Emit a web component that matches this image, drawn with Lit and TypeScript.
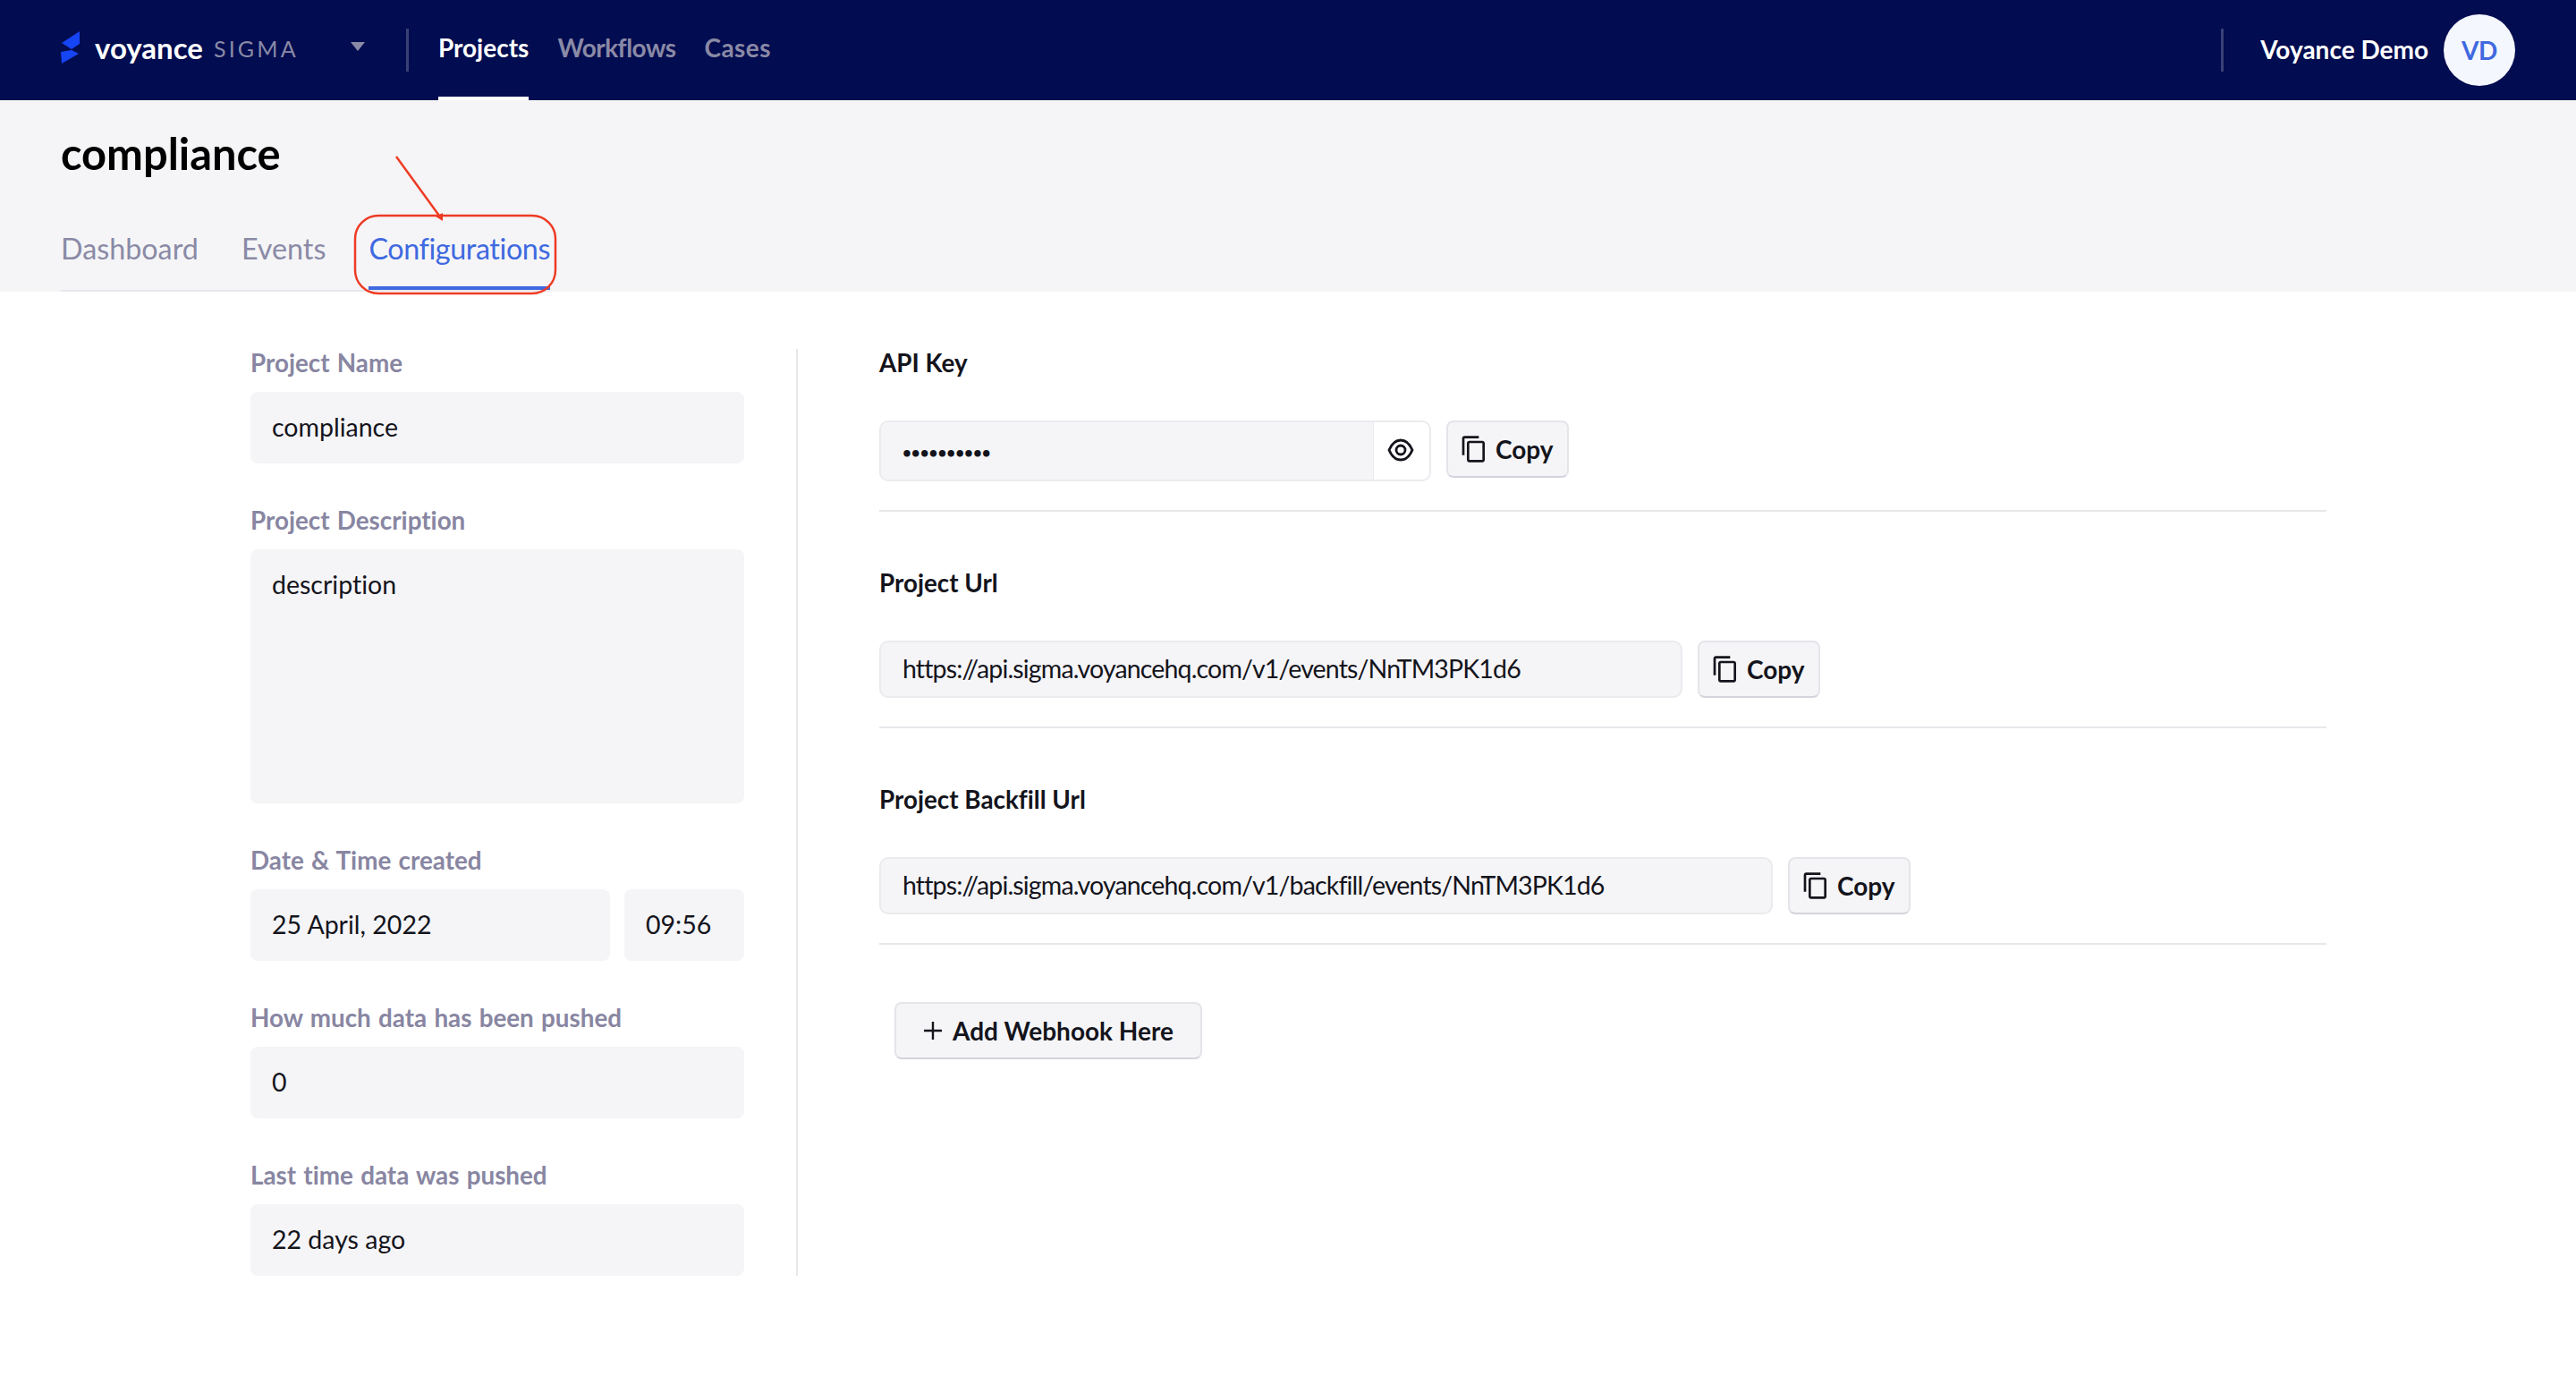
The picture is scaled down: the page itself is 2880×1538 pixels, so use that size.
import { LitElement, html, css, svg } from "lit";
import { customElement } from "lit/decorators.js";

const copyIcon = svg`<path d="M16 1H4c-1.1 0-2 .9-2 2v14h2V3h12V1zm3 4H8c-1.1 0-2 .9-2 2v14c0 1.1.9 2 2 2h11c1.1 0 2-.9 2-2V7c0-1.1-.9-2-2-2zm0 16H8V7h11v14z" />`;

const links = [
  { label: "Project Url", value: "https://api.sigma.voyancehq.com/v1/events/NnTM3PK1d6", width: 898 },
  { label: "Project Backfill Url", value: "https://api.sigma.voyancehq.com/v1/backfill/events/NnTM3PK1d6", width: 999 },
];

@customElement("app-root")
export class AppRoot extends LitElement {
  static styles = css`
    :host {
      display: block;
      position: relative;
      min-height: 1538px;
      background: #fff;
      color: #14141c;
      font-family: "Lato", "Liberation Sans", sans-serif;
      font-size: 28.5px;
      font-variant-ligatures: none;
    }

    .topbar {
      display: flex;
      align-items: center;
      height: 112px;
      padding: 0 68px;
      box-sizing: border-box;
      background: #020c50;
      color: #fff;
    }

    .logo {
      display: block;
      width: 22px;
      height: 36px;
      margin: 0 16px 6px 0;
    }

    .wordmark {
      margin-bottom: 6px;
      font-size: 33px;
      font-weight: 700;
      line-height: 40px;
    }

    .product {
      width: 153px;
      margin: 0 0 5px 12px;
      font-size: 25px;
      letter-spacing: 3.2px;
      color: #8a8aa6;
    }

    .caret {
      width: 0;
      height: 0;
      border-left: 8px solid transparent;
      border-right: 8px solid transparent;
      border-top: 10px solid #8a8aa6;
      margin-bottom: 8px;
    }

    .bar-sep {
      width: 3px;
      height: 48px;
      background: #3a4175;
    }

    .brand-sep {
      margin-left: 46px;
    }

    .nav {
      display: flex;
      gap: 32px;
      height: 112px;
      margin-left: 33px;
      font-size: 28px;
    }

    .nav a {
      box-sizing: border-box;
      height: 112px;
      line-height: 106px;
      font-weight: 700;
      color: #8a8aa6;
    }

    .nav a.active {
      color: #fff;
      border-bottom: 4px solid #fff;
    }

    .nav a.tight {
      letter-spacing: -0.5px;
    }

    .nav a.loose {
      letter-spacing: 0.4px;
    }

    .user {
      display: flex;
      align-items: center;
      margin-left: auto;
      font-size: 28px;
    }

    .user-name {
      margin: 0 17px 2px 41px;
      font-weight: 700;
    }

    .avatar {
      display: grid;
      place-items: center;
      width: 80px;
      height: 80px;
      border-radius: 50%;
      background: #f5f7ff;
      color: #3f69e0;
      font-weight: 700;
      letter-spacing: -0.3px;
    }

    .subheader {
      height: 214px;
      padding: 30px 0 0 68px;
      box-sizing: border-box;
      background: #f5f5f7;
    }

    h1 {
      margin: 0;
      font-size: 48.8px;
      font-weight: 700;
      line-height: 58px;
      color: #000;
    }

    .tabs {
      display: inline-flex;
      gap: 48px;
      margin-top: 40px;
      border-bottom: 2px solid #e8e8ec;
    }

    .tab {
      height: 84px;
      padding-top: 18px;
      box-sizing: border-box;
      font-size: 32.3px;
      line-height: 40px;
      color: #8a8aa6;
    }

    .tab.active {
      letter-spacing: -0.4px;
      color: #3f69e0;
      border-bottom: 4px solid #3f69e0;
    }

    .content {
      display: flex;
      padding: 64px 0 0 280px;
    }

    .details {
      width: 552px;
      padding-right: 58px;
      border-right: 2px solid #e8e8ec;
    }

    .field {
      margin-bottom: 48px;
    }

    .field:last-child {
      margin-bottom: 0;
    }

    .label {
      margin-bottom: 16px;
      font-size: 27.8px;
      line-height: 32px;
      font-weight: 700;
      word-spacing: 1.5px;
      color: #8886a2;
    }

    .box {
      height: 80px;
      padding: 0 24px;
      box-sizing: border-box;
      border-radius: 8px;
      background: #f5f5f7;
      line-height: 78px;
    }

    .box.tall {
      height: 284px;
    }

    .date-row {
      display: flex;
      gap: 16px;
    }

    .date-row .box:first-child {
      width: 402px;
    }

    .date-row .box:last-child {
      flex: 1;
    }

    .keys {
      width: 1618px;
      margin-left: 91px;
    }

    .key-label {
      margin-bottom: 48px;
      font-size: 27.8px;
      line-height: 32px;
      font-weight: 700;
    }

    .key-row {
      display: flex;
      align-items: flex-start;
      gap: 17px;
      padding-bottom: 32px;
      margin-bottom: 64px;
      border-bottom: 2px solid #e8e8ec;
    }

    .readout {
      height: 64px;
      padding: 0 24px;
      box-sizing: border-box;
      border: 2px solid #ebebef;
      border-radius: 10px;
      background: #f5f5f7;
      line-height: 58px;
      letter-spacing: -0.85px;
    }

    .secret {
      display: flex;
      width: 617px;
      height: 68px;
      box-sizing: border-box;
      border: 2px solid #ebebef;
      border-radius: 10px;
      overflow: hidden;
    }

    .secret-value {
      flex: 1;
      padding: 0 24px;
      background: #f5f5f7;
      font-size: 17px;
      font-weight: 700;
      line-height: 68px;
    }

    .eye {
      display: grid;
      place-items: center;
      width: 63px;
      padding: 0 3px 2px 0;
      box-sizing: border-box;
      border-left: 1px solid #ebebef;
    }

    .eye svg {
      display: block;
      width: 32px;
      height: 32px;
      fill: none;
      stroke: #14141c;
      stroke-width: 2.8;
    }

    button {
      display: inline-flex;
      align-items: center;
      height: 64px;
      padding-bottom: 2px;
      box-sizing: border-box;
      border: 2px solid #e4e4ea;
      border-bottom-color: #d4d4dd;
      border-radius: 8px;
      background: #f5f5f7;
      color: #14141c;
      font: inherit;
      font-size: 28px;
      font-weight: 700;
    }

    .copy {
      gap: 8px;
      width: 137px;
      padding-left: 13px;
    }

    .copy svg {
      display: block;
      width: 32px;
      height: 32px;
      fill: #14141c;
    }

    .add {
      gap: 12px;
      width: 344px;
      margin-left: 17px;
      padding-left: 31px;
    }

    .add svg {
      display: block;
      width: 20px;
      height: 20px;
      stroke: #14141c;
      stroke-width: 2.4;
    }

    .callout {
      position: absolute;
      left: 0;
      top: 0;
      width: 700px;
      height: 340px;
      pointer-events: none;
      fill: none;
      stroke: #ee3b24;
      stroke-width: 2.5;
    }

    .callout polygon {
      fill: #ee3b24;
      stroke: none;
    }
  `;

  private _copyButton() {
    return html`<button class="copy">
      <svg viewBox="0 0 24 24">${copyIcon}</svg>Copy
    </button>`;
  }

  render() {
    return html`
      <header class="topbar">
        <svg class="logo" viewBox="0 0 22 36">
          <polygon fill="#1645f5" points="1,13 21,0 21,14 12,20" />
          <polygon fill="#1645f5" points="12,21 20,25 1,36 0,23" />
        </svg>
        <span class="wordmark">voyance</span>
        <span class="product">SIGMA</span>
        <span class="caret"></span>
        <span class="bar-sep brand-sep"></span>
        <nav class="nav">
          <a class="active">Projects</a>
          <a class="tight">Workflows</a>
          <a class="loose">Cases</a>
        </nav>
        <div class="user">
          <span class="bar-sep"></span>
          <span class="user-name">Voyance Demo</span>
          <span class="avatar">VD</span>
        </div>
      </header>

      <section class="subheader">
        <h1>compliance</h1>
        <div class="tabs">
          <div class="tab">Dashboard</div>
          <div class="tab">Events</div>
          <div class="tab active">Configurations</div>
        </div>
      </section>

      <main class="content">
        <div class="details">
          <div class="field">
            <div class="label">Project Name</div>
            <div class="box">compliance</div>
          </div>
          <div class="field">
            <div class="label">Project Description</div>
            <div class="box tall">description</div>
          </div>
          <div class="field">
            <div class="label">Date &amp; Time created</div>
            <div class="date-row">
              <div class="box">25 April, 2022</div>
              <div class="box">09:56</div>
            </div>
          </div>
          <div class="field">
            <div class="label">How much data has been pushed</div>
            <div class="box">0</div>
          </div>
          <div class="field">
            <div class="label">Last time data was pushed</div>
            <div class="box">22 days ago</div>
          </div>
        </div>

        <div class="keys">
          <div class="key-label">API Key</div>
          <div class="key-row">
            <div class="secret">
              <div class="secret-value">••••••••••</div>
              <div class="eye">
                <svg viewBox="0 0 32 32">
                  <path d="M3 16C6 9 10.500 5 16 5S26 9 29 16C26 23 21.500 27 16 27S6 23 3 16z" />
                  <circle cx="16" cy="16" r="5" />
                </svg>
              </div>
            </div>
            ${this._copyButton()}
          </div>
          ${links.map(
            (link) => html`
              <div class="key-label">${link.label}</div>
              <div class="key-row">
                <div class="readout" style="width:${link.width}px">${link.value}</div>
                ${this._copyButton()}
              </div>
            `
          )}
          <button class="add">
            <svg viewBox="0 0 20 20"><path d="M10 0v20M0 10h20" /></svg>
            Add Webhook Here
          </button>
        </div>
      </main>

      <svg class="callout" viewBox="0 0 700 340">
        <rect x="397" y="241" width="224" height="87" rx="26" />
        <path d="M443 175 L491 241" />
        <polygon points="487,242 495,238 495,247" />
      </svg>
    `;
  }
}

declare global {
  interface HTMLElementTagNameMap {
    "app-root": AppRoot;
  }
}
